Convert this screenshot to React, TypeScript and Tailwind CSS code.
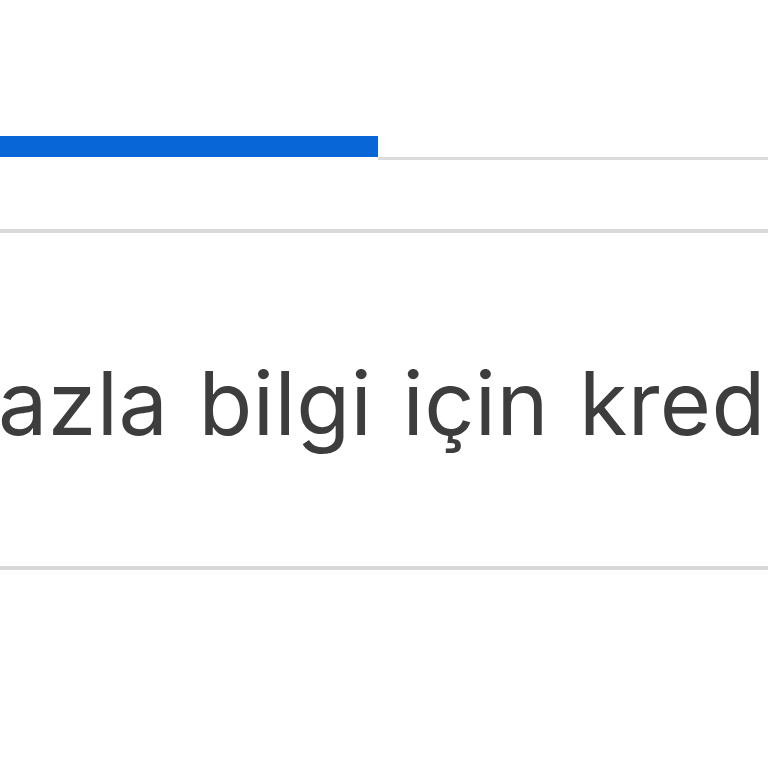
export default function App() {
  return (
    <div className="h-[768px] w-[768px] overflow-hidden bg-white font-['Inter','Noto_Sans',sans-serif]">
      {/* progress */}
      <div className="mt-[136px] flex h-[24px]">
        <div className="h-[21px] w-[378px] self-start bg-[#0866d6]" />
        <div className="h-[3px] flex-1 self-end bg-[#dcdcdc]" />
      </div>

      <div className="mt-[69px] h-[4px] w-full bg-[#d9d9d9]" />

      <div className="flex h-[333px] items-center overflow-hidden">
        <p className="ml-[-2px] mt-[6px] whitespace-nowrap text-[88px] leading-none tracking-[0.4px] text-[#3d3d3d] [word-spacing:5px]">
          azla bilgi için kredi
        </p>
      </div>

      <div className="h-[4px] w-full bg-[#d9d9d9]" />
    </div>
  );
}
